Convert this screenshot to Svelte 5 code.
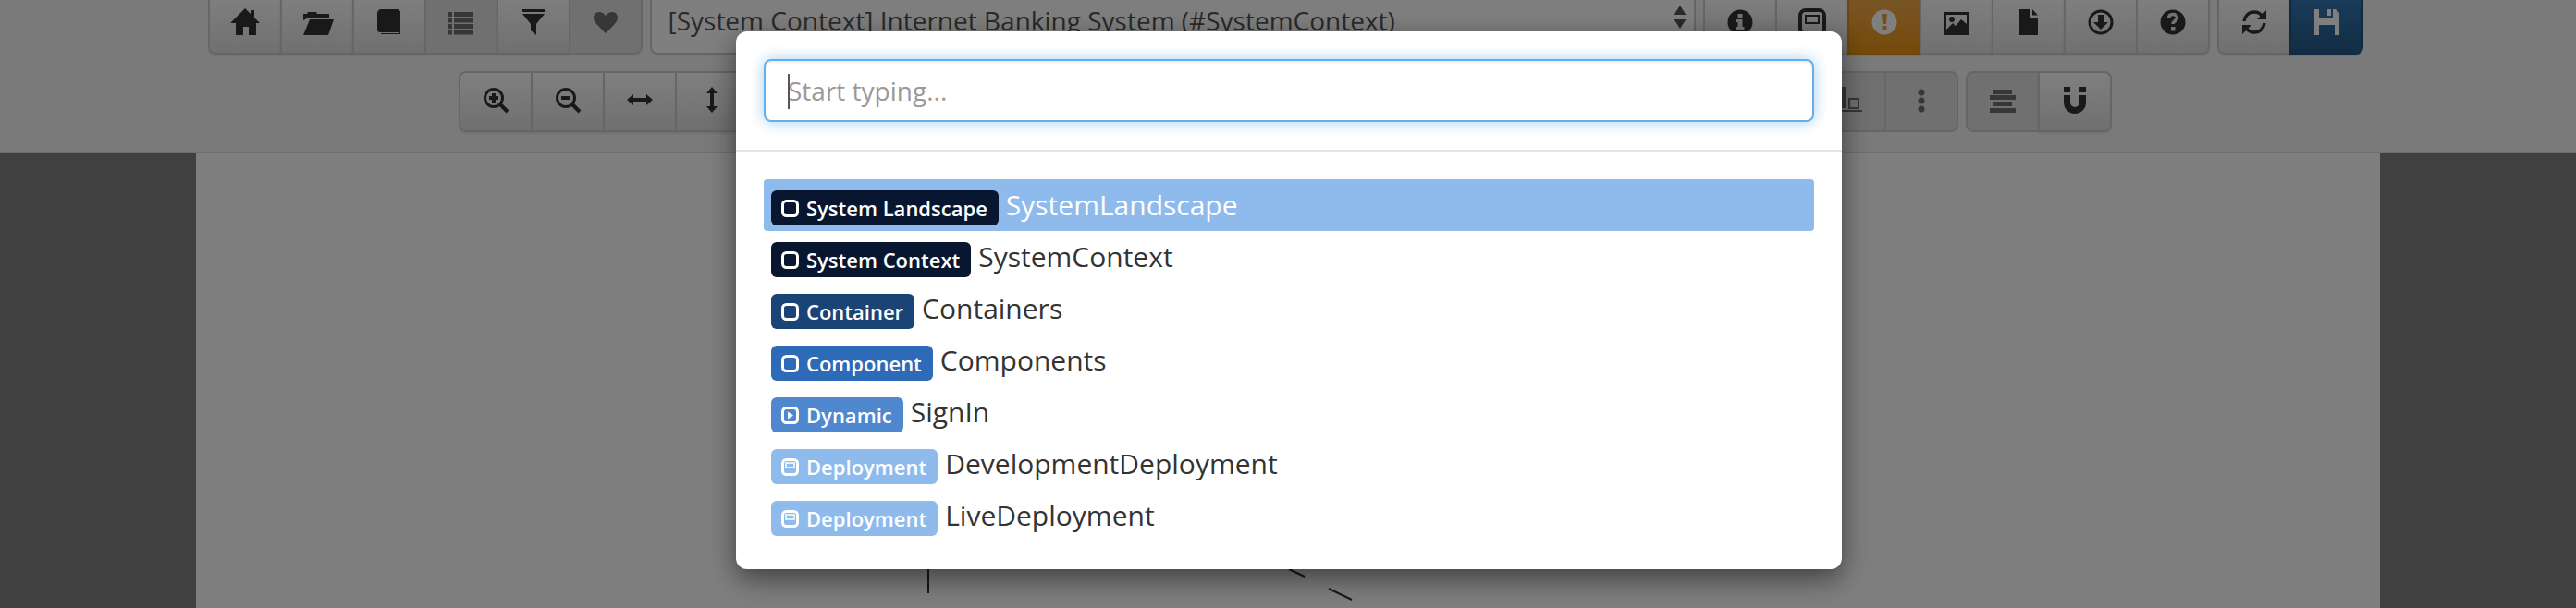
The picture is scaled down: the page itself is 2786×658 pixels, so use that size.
<script>
  const D = '#e6e6e6';
  const icons = {
    home: `<path d="M15 0l6 6V2h4v8l6 6h-4v13h-8v-9h-6v9H5V16H-1z"/>`,
    folder: `<path d="M0 13V6h4l1-2h9l1 2h13v4H6zM7 12h26l-6 17H0z"/>`,
    book: `<path d="M6 1h19v25H5c-2 0-3-1-3-3V5c0-2 2-4 4-4zM26 3h1v25H6v-1h20z"/>`,
    list: `<path d="M0 4h5v5H0zM7 4h21v5H7zM0 10.500h5v5H0zM7 10.500h21v5H7zM0 17h5v5H0zM7 17h21v5H7zM0 23.500h5v5H0zM7 23.500h21v5H7z"/>`,
    filter: `<path d="M3 1h24v3H3zM3 6h24l-9 11v12l-6-5v-7z"/>`,
    heart: `<path d="M15 27C8 20 2 15 2 10c0-4 3-6 6-6s5 1.500 7 4c2-2.500 4-4 7-4s6 2 6 6c0 5-6 10-13 17z"/>`,
    info: `<circle cx="15" cy="15" r="13.500"/><path fill="${D}" d="M12.500 6h5v4h-5zM11 12h6.500v8h2v3h-9v-3h2v-5H11z"/>`,
    diagram: `<rect x="2" y="2" width="26" height="26" rx="6" fill="none" stroke="currentColor" stroke-width="4"/><rect x="8" y="8" width="14" height="8" fill="none" stroke="currentColor" stroke-width="2"/>`,
    alert: `<circle cx="15" cy="15" r="13.500"/><path fill="#ec9f33" d="M12 6h6l-1 11h-4zM12.500 19h5v5h-5z"/>`,
    picture: `<path fill-rule="evenodd" d="M1 4h28v25H1zM4 7v16l7-7 3 3 6-7 6 5V7z"/><circle cx="10" cy="12" r="3"/>`,
    file: `<path d="M5 1h12v9h8v19H5zM19 1l6 6.500h-6z"/>`,
    download: `<circle cx="15" cy="15" r="12" fill="none" stroke="currentColor" stroke-width="3"/><path d="M12 7h6v8h5l-8 8-8-8h5z"/>`,
    help: `<circle cx="15" cy="15" r="13.500"/><path fill="none" stroke="${D}" stroke-width="3.500" d="M10.500 11c0-3 2-4.500 4.500-4.500s4.500 1.500 4.500 4c0 3-4.500 3.500-4.500 6.500"/><rect x="13" y="20" width="4.500" height="4.500" fill="${D}"/>`,
    refresh: `<path fill="none" stroke="currentColor" stroke-width="3.500" d="M4 14C5 8 9 4 15 4c4 0 7 2 9 5M26 16c-1 6-5 10-11 10-4 0-7-2-9-5"/><path d="M28 2v10H18zM2 28V18h10z"/>`,
    save: `<path d="M2 1h5v9h15V1h3l4 4v24h-5V18H7v11H2zM16 1h4v7h-4z"/>`,
    zoomin: `<circle cx="13" cy="13" r="9.500" fill="none" stroke="currentColor" stroke-width="3"/><path d="M11 8h4v3h3v4h-3v3h-4v-3H8v-4h3z"/><path stroke="currentColor" stroke-width="4" d="M20 20l8 8"/>`,
    zoomout: `<circle cx="13" cy="13" r="9.500" fill="none" stroke="currentColor" stroke-width="3"/><rect x="8" y="11" width="10" height="4"/><path stroke="currentColor" stroke-width="4" d="M20 20l8 8"/>`,
    resizeh: `<path d="M1 15l7-6v4h14v-4l7 6-7 6v-4H8v4z"/>`,
    resizev: `<path d="M15 1l6 7h-4v14h4l-6 7-6-7h4V8H9z"/>`,
    alignbottom: `<rect x="4" y="1" width="8" height="23"/><rect x="15" y="14" width="10" height="10" fill="none" stroke="currentColor" stroke-width="2"/><rect y="26" width="29" height="2"/>`,
    dots: `<circle cx="15" cy="7" r="3.500"/><circle cx="15" cy="16" r="3.500"/><circle cx="15" cy="25" r="3.500"/>`,
    aligncenter: `<path d="M5 4h20v5H5zM1 10h28v5H1zM5 17h20v5H5zM1 24h28v5H1z"/>`,
    magnet: `<path d="M3 1h7v6H3zM20 1h7v6h-7zM3 10h7v8a5 5 0 0 0 10 0v-8h7v8a12 12 0 0 1-24 0z"/>`,
  };

  const topLeft = [
    { icon: 'home' }, { icon: 'folder' }, { icon: 'book' },
    { icon: 'list', off: true }, { icon: 'filter' }, { icon: 'heart', off: true },
  ];
  const topRight = [
    { icon: 'info' }, { icon: 'diagram' }, { icon: 'alert', kind: 'warning' }, { icon: 'picture' },
    { icon: 'file' }, { icon: 'download' }, { icon: 'help' },
  ];
  const topSave = [{ icon: 'refresh' }, { icon: 'save', kind: 'primary' }];

  // the groups in the middle sit behind the modal
  const blank = (n) => Array.from({ length: n }, () => ({}));
  const bottomGroups = [
    [{ icon: 'zoomin' }, { icon: 'zoomout' }, { icon: 'resizeh' }, { icon: 'resizev' }],
    blank(3), blank(3), blank(3), blank(2), blank(3),
    [{ icon: 'alignbottom', off: true }, { icon: 'dots', off: true }],
    [{ icon: 'aligncenter', off: true }, { icon: 'magnet' }],
  ];

  const views = [
    { type: 'System Landscape', name: 'SystemLandscape', color: '#08172f', glyph: 'box', selected: true },
    { type: 'System Context', name: 'SystemContext', color: '#08172f', glyph: 'box' },
    { type: 'Container', name: 'Containers', color: '#1a4476', glyph: 'box' },
    { type: 'Component', name: 'Components', color: '#2d6bb8', glyph: 'box' },
    { type: 'Dynamic', name: 'SignIn', color: '#5088cf', glyph: 'play' },
    { type: 'Deployment', name: 'DevelopmentDeployment', color: '#8fbaec', glyph: 'screen' },
    { type: 'Deployment', name: 'LiveDeployment', color: '#8fbaec', glyph: 'screen' },
  ];
</script>

{#snippet buttons(group)}
  <div class="group">
    {#each group as b}
      <button class="btn {b.kind ?? ''}" class:off={b.off}>
        {#if b.icon}
          <svg viewBox="0 0 30 30" width="30" height="30" fill="currentColor">{@html icons[b.icon]}</svg>
        {/if}
      </button>
    {/each}
  </div>
{/snippet}

<div class="page">
  <div class="toolbar">
    <div class="row">
      {@render buttons(topLeft)}
      <div class="select">
        <span>[System Context] Internet Banking System (#SystemContext)</span>
        <svg viewBox="0 0 14 30" width="14" height="30" fill="#555"><path d="M7 0l6.500 10H.5zM.5 15h13L7 25z"/></svg>
      </div>
      {@render buttons(topRight)}
      {@render buttons(topSave)}
    </div>
    <div class="row">
      {#each bottomGroups as group}
        {@render buttons(group)}
      {/each}
    </div>
  </div>

  <div class="stage">
    <div class="canvas">
      <svg class="links" width="2362" height="492" stroke="#333" stroke-width="2">
        <path d="M792 440v36M1182 450l17 8M1225 471l25 12" />
      </svg>
    </div>
  </div>

  <div class="backdrop">
    <div class="modal">
      <div class="modal-header">
        <div class="field">
          <input placeholder="Start typing..." />
          <span class="caret"></span>
        </div>
      </div>
      <div class="modal-body">
        {#each views as v}
          <div class="view" class:selected={v.selected}>
            <span class="label" style="background: {v.color}">
              <svg viewBox="0 0 19 19" width="19" height="19" fill="none" stroke="#fff" stroke-width="3">
                <rect x="1.500" y="1.500" width="16" height="16" rx="4" />
                {#if v.glyph === 'play'}
                  <path d="M7 5.500l6 4-6 4z" fill="#fff" stroke="none" />
                {:else if v.glyph === 'screen'}
                  <rect x="5" y="5" width="9" height="5" stroke-width="1.500" />
                {/if}
              </svg>
              {v.type}
            </span>
            <span class="name">{v.name}</span>
          </div>
        {/each}
      </div>
    </div>
  </div>
</div>

<style>
  :global(body) {
    margin: 0;
    font-family: "Open Sans", "Liberation Sans", sans-serif;
  }

  .page {
    position: relative;
    display: flex;
    flex-direction: column;
    height: 658px;
    overflow: hidden;
    background: #808080;
  }

  .toolbar {
    display: flex;
    flex-direction: column;
    gap: 18px;
    height: 166px;
    box-sizing: border-box;
    padding: 0 6px 0 0;
    background: #f5f5f5;
    border-bottom: 2px solid #ddd;
  }

  .row {
    display: flex;
    justify-content: center;
    gap: 8px;
    height: 66px;
  }

  .row:first-child {
    margin-top: -7px;
  }

  .group {
    display: flex;
  }

  .btn {
    display: flex;
    align-items: center;
    justify-content: center;
    width: 80px;
    height: 66px;
    padding: 0 0 4px;
    margin-left: -2px;
    color: #333;
    background: linear-gradient(#fff, #e0e0e0);
    border: 2px solid #ccc;
    box-shadow: inset 0 2px 0 rgba(255, 255, 255, 0.15), 0 2px 2px rgba(0, 0, 0, 0.075);
  }

  .btn:first-child {
    margin-left: 0;
    border-radius: 8px 0 0 8px;
  }

  .btn:last-child {
    border-radius: 0 8px 8px 0;
  }

  .btn svg {
    overflow: visible;
  }

  .btn.off {
    background: #e0e0e0;
    box-shadow: none;
  }

  .btn.off svg {
    opacity: 0.65;
  }

  .btn.warning {
    color: #fff;
    background: linear-gradient(#f0ad4e, #eb9316);
    border-color: #e38d13;
  }

  .btn.primary {
    color: #fff;
    background: linear-gradient(#337ab7, #265a88);
    border-color: #245580;
  }

  .select {
    display: flex;
    align-items: flex-start;
    justify-content: space-between;
    width: 1131px;
    height: 66px;
    box-sizing: border-box;
    padding: 8px 8px 0 18px;
    color: #555;
    font-size: 28px;
    line-height: 38px;
    background: #fff;
    border: 2px solid #ccc;
    border-radius: 8px;
  }

  .select svg {
    margin: 3px 0 0;
  }

  .stage {
    flex: 1;
    display: flex;
    justify-content: center;
  }

  .canvas {
    position: relative;
    width: 2362px;
    background: #fff;
  }

  .links {
    position: absolute;
    top: 0;
    left: 0;
  }

  .backdrop {
    position: absolute;
    inset: 0;
    display: flex;
    justify-content: center;
    padding-left: 2px;
    background: rgba(0, 0, 0, 0.5);
  }

  .modal {
    width: 1196px;
    height: 582px;
    margin-top: 34px;
    background: #fff;
    border-radius: 12px;
    box-shadow: 0 10px 30px rgba(0, 0, 0, 0.5);
  }

  .modal-header {
    padding: 30px;
    border-bottom: 2px solid #e5e5e5;
  }

  .field {
    position: relative;
  }

  input {
    display: block;
    width: 100%;
    height: 68px;
    box-sizing: border-box;
    padding: 0 24px;
    font: inherit;
    font-size: 28px;
    color: #555;
    border: 2px solid #66afe9;
    border-radius: 8px;
    outline: none;
    box-shadow: inset 0 2px 2px rgba(0, 0, 0, 0.075), 0 0 16px rgba(102, 175, 233, 0.6);
  }

  input::placeholder {
    color: #999;
    opacity: 1;
  }

  .caret {
    position: absolute;
    top: 16px;
    left: 26px;
    width: 2px;
    height: 38px;
    background: #555;
  }

  .modal-body {
    padding: 30px;
  }

  .view {
    display: flex;
    gap: 8px;
    height: 56px;
    box-sizing: border-box;
    padding: 12px 0 0 8px;
    color: #333;
    border-radius: 4px;
  }

  .view.selected {
    color: #fff;
    background: #8fbaec;
  }

  .label {
    display: flex;
    align-items: center;
    gap: 8px;
    height: 38px;
    box-sizing: border-box;
    padding: 0 12px 0 11px;
    color: #fff;
    font-size: 22px;
    font-weight: 600;
    border-radius: 6px;
  }

  .name {
    font-size: 30px;
    line-height: 32px;
  }
</style>
